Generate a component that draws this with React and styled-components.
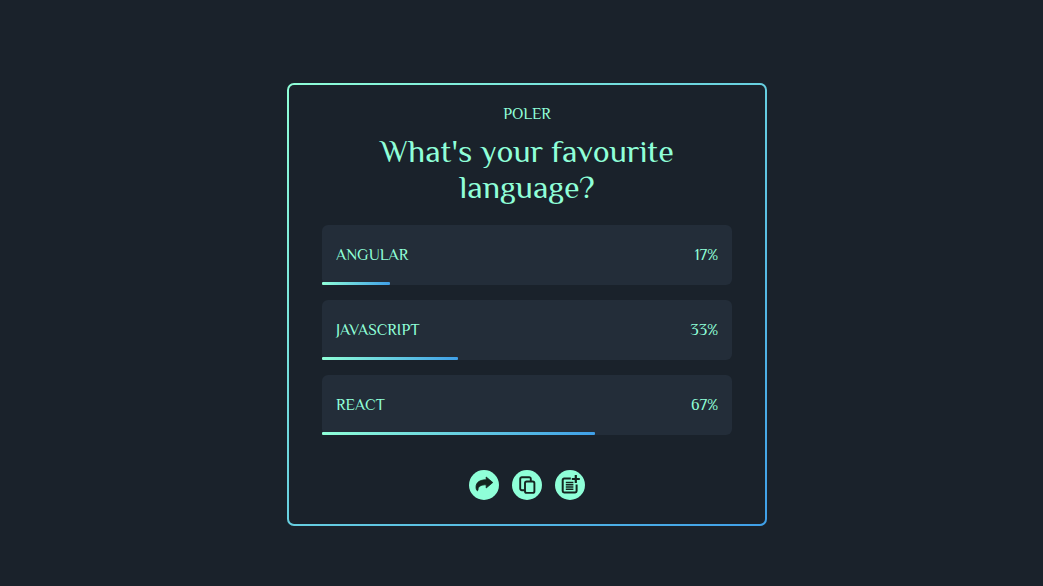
import React from "react";
import styled, { createGlobalStyle } from "styled-components";

const mint = "#8fffd8";
const blue = "#3f9fe8";
const night = "#1a222b";

const GlobalStyle = createGlobalStyle`
  *, *::before, *::after { box-sizing: border-box; }
  body {
    margin: 0;
    background: ${night};
    color: ${mint};
    font-family: Philosopher, "Liberation Serif", serif;
    font-size: 16px;
    line-height: 18px;
  }
`;

const Page = styled.main`
  min-height: 100vh;
  display: flex;
  align-items: center;
  justify-content: center;
  padding: 23px 0 0 11px;
`;

const Card = styled.section`
  width: 100%;
  max-width: 480px;
  padding: 20px 33px 24px;
  border: 2px solid transparent;
  border-radius: 7px;
  background:
    linear-gradient(${night}, ${night}) padding-box,
    linear-gradient(to bottom right, ${mint}, ${blue}) border-box;
`;

const Brand = styled.p`
  margin: 0;
  text-align: center;
`;

const Question = styled.h1`
  max-width: 340px;
  margin: 10px auto 20px;
  font-size: 32px;
  line-height: 36px;
  font-weight: 400;
  text-align: center;
`;

const Options = styled.ul`
  display: grid;
  gap: 15px;
  margin: 0;
  padding: 0;
  list-style: none;
`;

const Option = styled.li`
  position: relative;
  display: flex;
  align-items: center;
  justify-content: space-between;
  height: 60px;
  padding: 0 14px;
  border-radius: 6px;
  background: #232d39;
`;

const Bar = styled.span`
  position: absolute;
  left: 0;
  bottom: 0;
  height: 3px;
  border-radius: 1px;
  background: linear-gradient(to right, ${mint}, ${blue});
`;

const Actions = styled.div`
  display: flex;
  justify-content: center;
  gap: 13px;
  margin-top: 35px;
`;

const IconButton = styled.button`
  width: 30px;
  height: 30px;
  padding: 0;
  border: 0;
  border-radius: 50%;
  background: ${mint};
  color: #14251f;
  cursor: pointer;

  svg { display: block; }
`;

const ShareIcon = () => (
  <svg width="30" height="30" viewBox="0 0 30 30" fill="currentColor" aria-hidden="true">
    <path
      d="M17.2 7v2.8C11 9.8 7 12.2 7 17.2c0 1.4.3 2.5.9 3.2.5.5 1.1.2 1.1-.5.1-3.6 3-5.1 8.2-5.1V18l6.6-5.5z"
      stroke="currentColor"
      strokeWidth="0.8"
      strokeLinejoin="round"
    />
  </svg>
);

const CopyIcon = () => (
  <svg width="30" height="30" viewBox="0 0 30 30" fill="none" stroke="currentColor" strokeWidth="1.9" aria-hidden="true">
    <path d="M12.6 20.3H9.9a1.7 1.7 0 0 1-1.7-1.7V8.9a1.7 1.7 0 0 1 1.7-1.7h7.2a1.7 1.7 0 0 1 1.7 1.7v2" />
    <rect x="13" y="11.5" width="9.4" height="11.4" rx="1.7" />
  </svg>
);

const NewPollIcon = () => (
  <svg width="30" height="30" viewBox="0 0 30 30" fill="none" stroke="currentColor" aria-hidden="true">
    <path d="M15.8 8.6H9.1A1.4 1.4 0 0 0 7.7 10v11a1.4 1.4 0 0 0 1.4 1.4h11.1a1.4 1.4 0 0 0 1.4-1.4v-6.6" strokeWidth="2" />
    <path d="M20.8 5v8M16.8 9h8" strokeWidth="2.2" />
    <path d="M10.8 12.4h7.6M10.8 14.7h7.6M10.8 17h7.6M10.8 19.3h7.6" strokeWidth="1.5" />
  </svg>
);

const options = [
  { name: "ANGULAR", percent: 17, share: 16.6 },
  { name: "JAVASCRIPT", percent: 33, share: 33.2 },
  { name: "REACT", percent: 67, share: 66.6 },
];

const actions = [
  { label: "Share poll", Icon: ShareIcon },
  { label: "Copy link", Icon: CopyIcon },
  { label: "New poll", Icon: NewPollIcon },
];

export default function App() {
  return (
    <>
      <GlobalStyle />
      <Page>
        <Card>
          <Brand>POLER</Brand>
          <Question>What's your favourite language?</Question>
          <Options>
            {options.map(({ name, percent, share }) => (
              <Option key={name}>
                <span>{name}</span>
                <span>{percent}%</span>
                <Bar style={{ width: `${share}%` }} />
              </Option>
            ))}
          </Options>
          <Actions>
            {actions.map(({ label, Icon }) => (
              <IconButton key={label} type="button" aria-label={label}>
                <Icon />
              </IconButton>
            ))}
          </Actions>
        </Card>
      </Page>
    </>
  );
}
